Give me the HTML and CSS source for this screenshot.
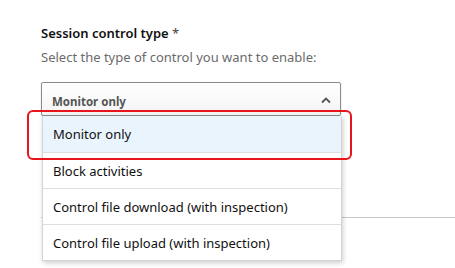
FILE: index.html
```html
<!DOCTYPE html>
<html lang="en">
<head>
    <meta charset="UTF-8">
    <meta name="viewport" content="width=device-width, initial-scale=1.0">
    <title>Session control</title>
    <link rel="stylesheet" href="styles.css">
</head>
<body>
    <div class="page">
        <div class="field">
            <div class="field-label">Session control type <span class="required">*</span></div>
            <div class="field-desc">Select the type of control you want to enable:</div>
            <div class="dropdown">
                <div class="select">
                    <span class="select-value">Monitor only</span>
                    <svg class="chevron" width="12" height="8" viewBox="0 0 12 8">
                        <path d="M2 6.5 L6 2.5 L10 6.5" fill="none" stroke="#555" stroke-width="1.8"/>
                    </svg>
                </div>
                <ul class="menu">
                    <li class="menu-item selected">Monitor only</li>
                    <li class="menu-item">Block activities</li>
                    <li class="menu-item">Control file download (with inspection)</li>
                    <li class="menu-item">Control file upload (with inspection)</li>
                </ul>
                <div class="callout"></div>
            </div>
        </div>
        <div class="divider"></div>
    </div>
</body>
</html>
```

FILE: styles.css
```css
html, body {
    height: 100%;
}

body {
    font-family: "Noto Sans", "Open Sans", sans-serif;
    margin: 0;
    background-color: #fff;
    color: #000;
}

.page {
    min-height: 268px;
    padding: 24px 0 0 41px;
    box-sizing: border-box;
}

.field-label {
    font-size: 13px;
    font-weight: 600;
    line-height: 18px;
    color: #111;
}

.required {
    color: #444;
    font-weight: 400;
}

.field-desc {
    margin-top: 6px;
    font-size: 13px;
    line-height: 18px;
    color: #6b6b6b;
}

.dropdown {
    position: relative;
    width: 300px;
    margin-top: 16px;
}

.select {
    display: flex;
    align-items: center;
    justify-content: space-between;
    height: 32px;
    padding: 0 8px 0 10px;
    border: 1px solid #8a8a8a;
    border-radius: 2px;
    background: linear-gradient(#fff, #f4f4f4);
    box-shadow: 0 1px 2px rgba(0, 0, 0, 0.15);
}

.select-value {
    font-size: 11.5px;
    font-weight: 700;
    color: #555;
    padding-top: 4px;
}

.chevron {
    margin-top: 2px;
}

.menu {
    position: absolute;
    top: 34px;
    left: 1px;
    width: 298px;
    margin: 0;
    padding: 0;
    list-style: none;
    background: #fff;
    border: 1px solid #d4d4d4;
    border-top: none;
    box-shadow: 1px 2px 5px rgba(0, 0, 0, 0.2);
    z-index: 2;
}

.menu-item {
    height: 35px;
    padding: 0 10px;
    display: flex;
    align-items: center;
    font-size: 13px;
    color: #111;
    border-top: 1px solid #dedede;
}

.menu-item:first-child {
    border-top: none;
    height: 36px;
}

.menu-item.selected {
    background: #eaf4fd;
}

.callout {
    position: absolute;
    top: 28px;
    left: -14px;
    width: 321px;
    height: 46px;
    border: 2px solid #e8141b;
    border-radius: 6px;
    z-index: 3;
}

.divider {
    margin-top: 101px;
    height: 1px;
    background: #c8c8c8;
}
```
